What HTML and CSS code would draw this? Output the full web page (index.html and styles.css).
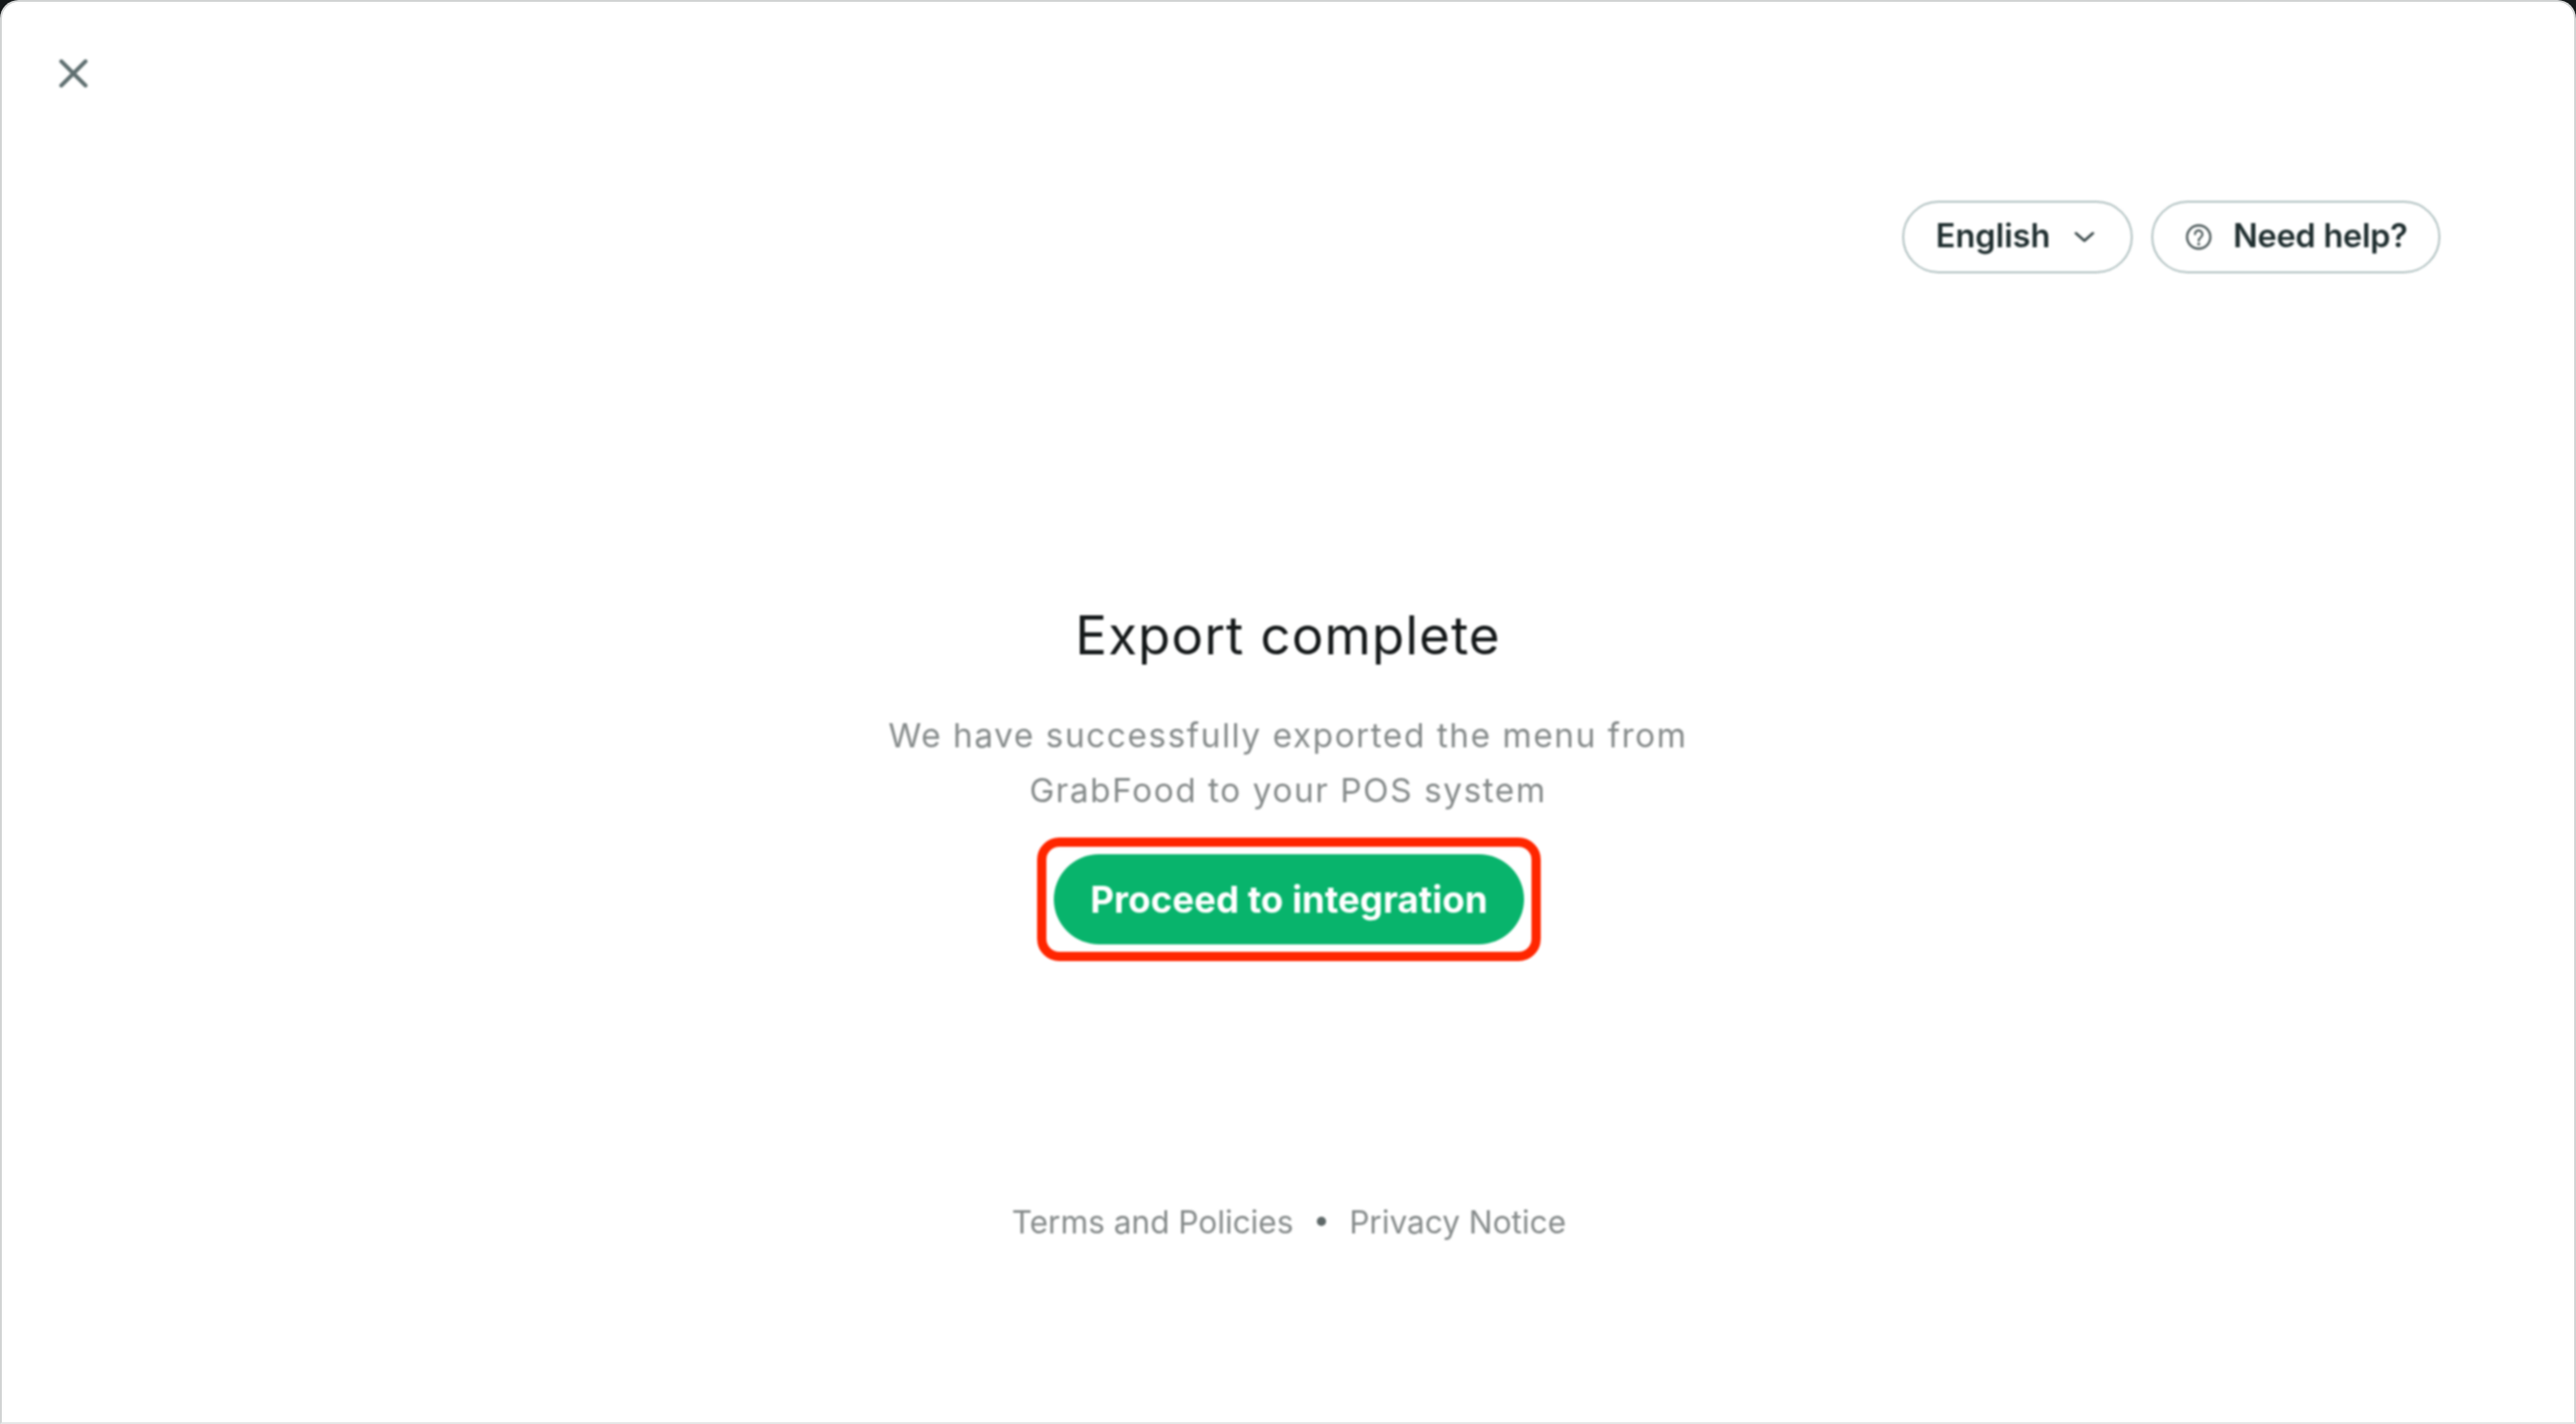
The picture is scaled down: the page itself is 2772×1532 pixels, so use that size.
FILE: index.html
```html
<!DOCTYPE html>
<html lang="en">
<head>
<meta charset="utf-8">
<title>Export complete</title>
<link rel="stylesheet" href="styles.css">
</head>
<body>
<div class="card">
  <div class="soft">
    <button class="close" aria-label="Close">
      <svg width="32" height="32" viewBox="0 0 32 32"><path d="M3 3 29 29M29 3 3 29" fill="none" stroke="#5f6f70" stroke-width="4.4" stroke-linecap="round"/></svg>
    </button>
    <div class="toolbar">
      <button class="pill pill-lang"><span class="pill-text">English</span>
        <svg class="chev" width="22" height="14" viewBox="0 0 22 14"><path d="M2 3 11 11 20 3" fill="none" stroke="#3c4a4b" stroke-width="3" stroke-linecap="round" stroke-linejoin="round"/></svg>
      </button>
      <button class="pill pill-help">
        <svg class="help" width="30" height="30" viewBox="0 0 30 30"><circle cx="15" cy="15" r="12.5" fill="none" stroke="#4a5758" stroke-width="2.4"/><path d="M11 12a4 4 0 1 1 6.2 3.3C15.8 16.300 15 17 15 19" fill="none" stroke="#4a5758" stroke-width="2.2" stroke-linecap="round"/><circle cx="15" cy="22.500" r="1.500" fill="#4a5758"/></svg>
        <span class="pill-text help-text">Need help?</span>
      </button>
    </div>
    <main class="main">
      <h1 class="title">Export complete</h1>
      <p class="sub">We have successfully exported the menu from<br>GrabFood to your POS system</p>
      <div class="highlight">
        <button class="cta">Proceed to integration</button>
      </div>
    </main>
    <footer class="footer">
      <a class="link">Terms and Policies</a>
      <span class="dot"></span>
      <a class="link">Privacy Notice</a>
    </footer>
  </div>
</div>
</body>
</html>
```
FILE: styles.css
```css
* { box-sizing: border-box; }
html, body { margin: 0; height: 100%; }
body {
  background: #15191a;
  overflow: hidden;
  font-family: Inter, "Liberation Sans", sans-serif;
}
.card {
  height: 1532px;
  background: #fff;
  border: 2px solid #d2d4d4;
  border-bottom-color: #e6e7e7;
  border-radius: 20px 20px 0 0;
}
.soft {
  height: 100%;
  display: flex;
  flex-direction: column;
  filter: blur(0.8px);
}
button { font-family: inherit; background: none; border: 0; padding: 0; }
.close {
  align-self: flex-start;
  display: flex;
  margin: 61px 0 0 61px;
}
.toolbar {
  display: flex;
  justify-content: flex-end;
  gap: 20px;
  margin: 121px 144px 0 0;
}
.pill {
  display: flex;
  align-items: center;
  height: 78px;
  border: 2px solid #aebfbf;
  border-radius: 39px;
  font-size: 35px;
  font-weight: 600;
  color: #1f2e2f;
  background: #fff;
}
.pill-text { position: relative; top: -2px; }
.help-text { letter-spacing: -0.3px; }
.pill-lang { width: 248px; padding-left: 34px; gap: 26px; }
.pill-help { width: 311px; padding-left: 34px; gap: 22px; }
.main {
  display: flex;
  flex-direction: column;
  align-items: center;
  margin-top: 358px;
}
.title {
  margin: 0;
  font-size: 57px;
  line-height: 64px;
  font-weight: 400;
  letter-spacing: 1.1px;
  color: #141819;
}
.sub {
  margin: 46px 0 0;
  font-size: 36px;
  line-height: 59px;
  letter-spacing: 1.62px;
  text-align: center;
  color: #858a8a;
}
.highlight {
  margin: 21px 0 0 2px;
  width: 542px;
  height: 133px;
  padding: 8px;
  border: 10px solid #ff2600;
  border-radius: 24px;
  display: flex;
}
.cta {
  flex: 1;
  border-radius: 50px;
  background: #08b46c;
  color: #fff;
  font-size: 39.5px;
  font-weight: 700;
}
.footer {
  display: flex;
  justify-content: center;
  align-items: center;
  gap: 25px;
  margin: 260px 0 0 2px;
  height: 40px;
  font-size: 34px;
  color: #858a8a;
}
.dot {
  width: 10px;
  height: 10px;
  border-radius: 50%;
  background: #5d6767;
}
```
